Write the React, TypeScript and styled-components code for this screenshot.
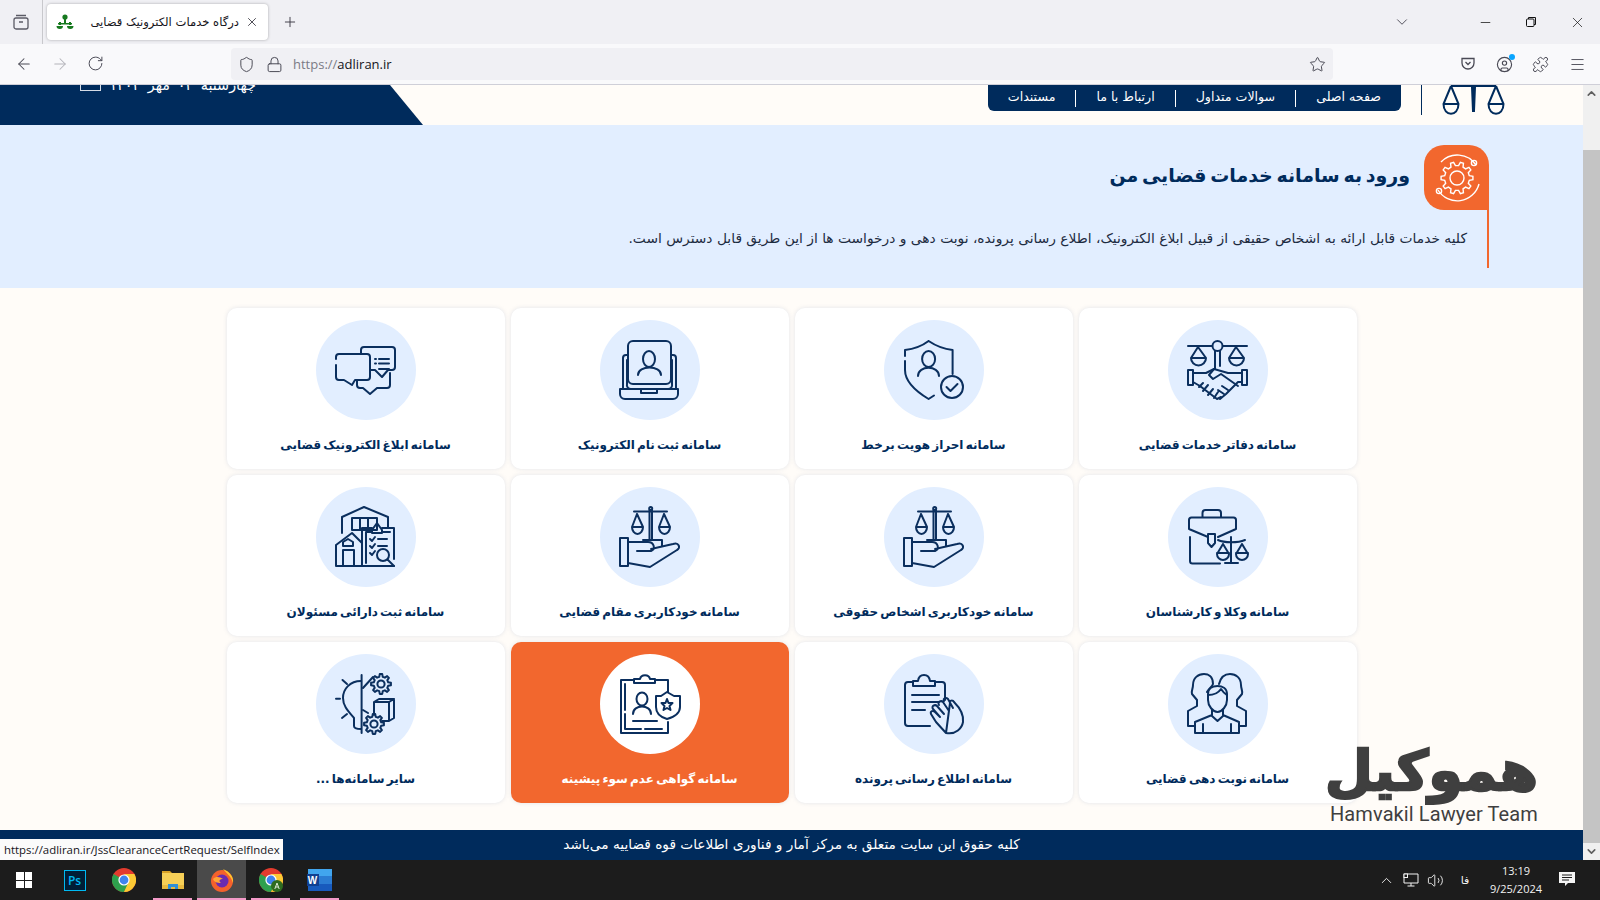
import React from "react";
import styled, { createGlobalStyle } from "styled-components";
import {
  ArrowLeft,
  ArrowRight,
  ChevronDown,
  ChevronUp,
  CircleUser,
  Lock,
  Menu,
  Minus,
  Plus,
  Puzzle,
  RotateCw,
  Shield,
  Star,
  Volume2,
  X,
} from "lucide-react";

const NAVY = "#002b5c";
const ORANGE = "#f2672e";
const SKY = "#e2eeff";

const GlobalStyle = createGlobalStyle`
  html, body {
    margin: 0;
    padding: 0;
    overflow: hidden;
  }
  * {
    box-sizing: border-box;
  }
  body {
    font-family: "DejaVu Sans", "Noto Sans", sans-serif;
  }
`;

// outline of a cog wheel, used by the banner badge and the last card
const gearPath = (cx: number, cy: number, outer: number, inner: number, teeth: number) => {
  const step = (Math.PI * 2) / teeth;
  const points: string[] = [];
  for (let i = 0; i < teeth; i++) {
    const a = i * step;
    [
      [inner, a - step * 0.3],
      [outer, a - step * 0.16],
      [outer, a + step * 0.16],
      [inner, a + step * 0.3],
    ].forEach(([r, t]) => {
      points.push(`${(cx + r * Math.cos(t)).toFixed(2)} ${(cy + r * Math.sin(t)).toFixed(2)}`);
    });
  }
  return `M${points.join("L")}Z`;
};

const Gear = ({ cx, cy, r }: { cx: number; cy: number; r: number }) => (
  <g>
    <circle cx={cx} cy={cy} r={r * 0.36} />
    <path d={gearPath(cx, cy, r, r * 0.74, 8)} />
  </g>
);

const HandshakeArt = () => (
  <IconArt viewBox="0 0 100 100">
    <path d="M20 26H44M55 26H79" />
    <circle cx="49.5" cy="26" r="5" />
    <path d="M47 31V49M52 31V46" />
    <path d="M30 27L23 38a7.5 7.5 0 0 0 15 0L30 27M23 38H38" />
    <path d="M68 27L61 38a7.5 7.5 0 0 0 15 0L68 27M61 38H76" />
    <path d="M20 50h5v15h-5zM74 50h5v15h-5z" />
    <path d="M25 53H38L46 49L60 53H74M74 62H70L58 74L52 79" />
    <path d="M46 49L41 55L45 59L53 54L70 66" />
    <path d="M25 62L32 66L49 79L53 77M35 63L31 67M40 65L35 71M45 69L40 75M50 72L46 78M60 70L54 66M56 74L50 70" />
  </IconArt>
);

const ShieldArt = () => (
  <IconArt viewBox="0 0 100 100">
    <path d="M44.6 21C38 26 30 29 21 30V36M21 41V50C21 62 33 72 44.6 79L50 75.5M44.6 21C52 26 60 29 68.6 30V54" />
    <ellipse cx="44.6" cy="39" rx="6.5" ry="8" />
    <path d="M34 56C34 45 55 45 55 56" />
    <circle cx="68" cy="67" r="11" />
    <path d="M62.5 67l4 4l7-7" />
  </IconArt>
);

const LaptopArt = () => (
  <IconArt viewBox="0 0 100 100">
    <rect x="28" y="21" width="43" height="43" rx="5" />
    <ellipse cx="49" cy="39" rx="6" ry="8" />
    <path d="M38 55C38 45 61 45 61 55" />
    <path d="M28 35H26a3 3 0 0 0-3 3V69M71 35h2a3 3 0 0 1 3 3V69" />
    <path d="M27 40V64a4 4 0 0 0 4 5H41v4H57v-4H68a4 4 0 0 0 4-5V40" />
    <path d="M20 69H78V74a5 5 0 0 1-5 5H25a5 5 0 0 1-5-5Z" />
  </IconArt>
);

const ChatArt = () => (
  <IconArt viewBox="0 0 100 100">
    <path d="M20 39V37a3 3 0 0 1 3-3H51a3 3 0 0 1 3 3V57a3 3 0 0 1-3 3H39L36 65L28 60H23a3 3 0 0 1-3-3V45" />
    <path d="M45 34V30a3 3 0 0 1 3-3H76a3 3 0 0 1 3 3V47a3 3 0 0 1-3 3H72L66 57L59 50H54" />
    <path d="M41 60V65a3 3 0 0 0 3 3H47L54 74L61 68H71a3 3 0 0 0 3-3V53" />
    <path d="M63 39H73M63 43.5H73M63 49H73M59 39H60M59 43.5H60" />
  </IconArt>
);

const BriefcaseArt = () => (
  <IconArt viewBox="0 0 100 100">
    <path d="M34.5 30V26a3 3 0 0 1 3-3H50a3 3 0 0 1 3 3V30" />
    <path d="M40 50L21 42V33a2.5 2.5 0 0 1 2.5-2.5H65.5A2.5 2.5 0 0 1 68 33V42L50 50" />
    <path d="M40 47H47V56L43.5 60L40 56Z" />
    <path d="M22 50V74a2.5 2.5 0 0 0 2.5 2.5H52" />
    <path d="M63 50V76M57 76H70M50 53C56 56 70 56 77 53" />
    <path d="M55 57L49 67a6 6 0 0 0 12 0L55 57M49 66H61" />
    <path d="M74 57L68 67a6 6 0 0 0 12 0L74 57M68 66H80" />
  </IconArt>
);

const HandScalesArt = () => (
  <IconArt viewBox="0 0 100 100">
    <circle cx="50.7" cy="21.5" r="1.5" />
    <path d="M49.5 23V52M52 23V52M34 24.5H67" />
    <path d="M37 27L32 40a5.5 7 0 0 0 11 0L37 27M32 40H43" />
    <path d="M64 27L59 40a5.5 7 0 0 0 11 0L64 27M59 40H70" />
    <path d="M20 51h8v28h-8z" />
    <path d="M43 53H62V59" />
    <path d="M28 55H48C54 55 56 62 51 64H37M51 62L73 57C79 55 81 61 77 63L50 80L28 76" />
  </IconArt>
);

const AssetsArt = () => (
  <IconArt viewBox="0 0 100 100">
    <path d="M26 46V30L48 20L72 30V41" />
    <path d="M36 31H61V43H36ZM44 31V43M52 31V43" />
    <path d="M20 79V58L36 46L46 56M20 79H78" />
    <path d="M27 79V63H38V79M27 59V55L32 52L37 55V59Z" />
    <path d="M46 79V41H56M66 41H78V72M50 76V45H56M66 45H74" />
    <path d="M56 43L61 36L66 43V46H56Z" />
    <path d="M54 52L56 54L59 50M54 59L56 61L59 57M54 66L56 68L59 64M62 52H71M62 59H71" />
    <circle cx="67" cy="68" r="6" />
    <path d="M71.5 72.5L78 79" />
  </IconArt>
);

const PeopleArt = () => (
  <IconArt viewBox="0 0 100 100">
    <path d="M39 38C41 34 44 33 45 30C45 22 40 20 36 20C30 20 25 24 25 31C25 35 23 37 24 40L29 46V52L20 57V72H27" />
    <path d="M51 30C53 22 58 20 62 20C68 20 73 24 73 31C73 35 75 37 74 40L69 46V52L78 57V72H71" />
    <path d="M40 40V46C40 52 45 58 49.5 58C54 58 59 52 59 46V40C59 34 54 32 49.5 32C45 32 40 34 40 40Z" />
    <path d="M40 41C46 41 51 38 53 35C55 38 57 40 59 41" />
    <path d="M44 56V61L27 68V79H71V68L55 61V56M44 62L49.5 67L55 62M35 79V70M63 79V70" />
  </IconArt>
);

const TouchBoardArt = () => (
  <IconArt viewBox="0 0 100 100">
    <path d="M46 72H24a3 3 0 0 1-3-3V31a3 3 0 0 1 3-3H29M51 28H58a3 3 0 0 1 3 3V46" />
    <path d="M29 32V27H34C35 19 45 19 46 27H51V32Z" />
    <path d="M28 41H55M28 48H55M28 56H41" />
    <path d="M62 79L52 68L47 60C46 57 49 56 51 58L56 63L49 55C47 52 51 50 53 52L60 60M55 51C53 48 57 46 59 48L65 57M60 47C59 44 62 43 64 45L69 54M66 49C65 46 69 46 70 48C75 53 80 60 79 68C78 74 72 81 62 79Z" />
  </IconArt>
);

const CertificateArt = () => (
  <IconArt viewBox="0 0 100 100">
    <path d="M34 26H21V79H68V68M55 26H68V38" />
    <path d="M25 30V56M25 60V75H41M45 75H62" />
    <path d="M34 29V25H40C41 20 49 20 50 25H55V29Z" />
    <ellipse cx="42" cy="45" rx="5.5" ry="6.5" />
    <path d="M33 60C33 50 51 50 51 60M33 67H57" />
    <path d="M67 38L74 42L80 42V53C80 59 74 63 67 65C60 63 56 59 56 53V42L61 42Z" />
    <path d="M67 45L68.5 49H72.5L69.5 52L70.5 56L67 54L63.5 56L64.5 52L61.5 49H65.5Z" />
  </IconArt>
);

const BulbArt = () => (
  <IconArt viewBox="0 0 100 100">
    <path d="M45.6 21V79" />
    <path d="M45 27C34 27 27 35 27 44C27 52 32 57 38 64V72C38 74 41 75 45 75" />
    <path d="M26.5 26L31 30M20 44.7H24M26 64L31 60" />
    <path d="M47 34L57 23M47 56L52 59" />
    <path d="M58 48L63 45H78V64L73 67H66M58 48H73V67M73 48L78 45M58 48V61" />
    <Gear cx={65} cy={30} r={10} />
    <Gear cx={58} cy={70} r={10} />
  </IconArt>
);

const services = [
  { title: "سامانه دفاتر خدمات قضایی", Art: HandshakeArt },
  { title: "سامانه احراز هویت برخط", Art: ShieldArt },
  { title: "سامانه ثبت نام الکترونیک", Art: LaptopArt },
  { title: "سامانه ابلاغ الکترونیک قضایی", Art: ChatArt },
  { title: "سامانه وکلا و کارشناسان", Art: BriefcaseArt },
  { title: "سامانه خودکاربری اشخاص حقوقی", Art: HandScalesArt },
  { title: "سامانه خودکاربری مقام قضایی", Art: HandScalesArt },
  { title: "سامانه ثبت دارائی مسئولان", Art: AssetsArt },
  { title: "سامانه نوبت دهی قضایی", Art: PeopleArt },
  { title: "سامانه اطلاع رسانی پرونده", Art: TouchBoardArt },
  { title: "سامانه گواهی عدم سوء پیشینه", Art: CertificateArt, active: true },
  { title: "سایر سامانه‌ها ...", Art: BulbArt },
];

const navLinks = ["صفحه اصلی", "سوالات متداول", "ارتباط با ما", "مستندات"];

const ChromeLogo = ({ badge }: { badge?: boolean }) => (
  <svg width="24" height="24" viewBox="0 0 24 24">
    <circle cx="12" cy="12" r="12" fill="#e33b2e" />
    <path d="M12 12L1.6 6A12 12 0 0 0 12 24L18 13.5Z" fill="#2ea04d" />
    <path d="M12 6H22.4A12 12 0 0 1 12 24L17 13Z" fill="#fcc934" />
    <circle cx="12" cy="12" r="5.6" fill="#fff" />
    <circle cx="12" cy="12" r="4.4" fill="#3f84ee" />
    {badge && <circle cx="18" cy="18" r="6" fill="#2f6b1f" />}
    {badge && <path d="M15.8 21L18 15L20.2 21M16.6 19H19.4" stroke="#dfe9d8" strokeWidth="1" fill="none" />}
  </svg>
);

const App = () => {
  return (
    <Screen>
      <GlobalStyle />
      <TabStrip>
        <StripIcon>
          <svg width="18" height="18" viewBox="0 0 18 18" fill="none" stroke="#5b5b66" strokeWidth="1.3">
            <rect x="2" y="5" width="14" height="11" rx="2" />
            <path d="M4 2.5H14M7 9H11" />
          </svg>
        </StripIcon>
        <StripDivider />
        <Tab>
          <svg width="18" height="18" viewBox="0 0 18 18" fill="#17791f">
            <circle cx="9" cy="4" r="2.6" />
            <path d="M8 6h2v5H8zM2 10h14v1.5H2z" />
            <path d="M0.5 13h6.5a3.2 3 0 0 1-6.5 0zM11 13h6.5a3.2 3 0 0 1-6.5 0zM3 9h2v3H3zM13 9h2v3h-2z" />
          </svg>
          <TabTitle dir="rtl">درگاه خدمات الکترونیک قضایی</TabTitle>
          <X size={14} strokeWidth={1.4} color="#2b2a33" />
        </Tab>
        <NewTab>
          <Plus size={16} strokeWidth={1.4} color="#3a3944" />
        </NewTab>
        <StripSpacer />
        <ChevronDown size={18} strokeWidth={1.2} color="#45444f" />
        <WindowControls>
          <WindowCell>
            <Minus size={15} strokeWidth={1.2} color="#111" />
          </WindowCell>
          <WindowCell>
            <svg width="12" height="12" viewBox="0 0 12 12" fill="none" stroke="#111" strokeWidth="1">
              <rect x="1.5" y="3" width="7.5" height="7.5" rx="1" />
              <path d="M3.5 3V1.5H10.5V8.5H9" />
            </svg>
          </WindowCell>
          <WindowCell>
            <X size={17} strokeWidth={1} color="#111" />
          </WindowCell>
        </WindowControls>
      </TabStrip>

      <Toolbar>
        <ToolButtons>
          <ArrowLeft size={18} strokeWidth={1.4} color="#4a4a55" />
          <ArrowRight size={18} strokeWidth={1.4} color="#b4b4ba" />
          <RotateCw size={17} strokeWidth={1.4} color="#4a4a55" />
        </ToolButtons>
        <UrlBar>
          <Shield size={17} strokeWidth={1.4} color="#4a4a55" />
          <Lock size={17} strokeWidth={1.4} color="#4a4a55" />
          <UrlText>
            <span>https://</span>adliran.ir
          </UrlText>
          <UrlStar>
            <Star size={17} strokeWidth={1.4} color="#4a4a55" />
          </UrlStar>
        </UrlBar>
        <ToolAddons>
          <svg width="16" height="16" viewBox="0 0 16 16" fill="none" stroke="#4a4a55" strokeWidth="1.3">
            <path d="M2 2.5H14V7A6 6 0 0 1 2 7Z" />
            <path d="M5.5 6L8 8.5L10.5 6" />
          </svg>
          <AccountIcon>
            <CircleUser size={17} strokeWidth={1.6} color="#4a4a55" />
          </AccountIcon>
          <Puzzle size={17} strokeWidth={1.4} color="#4a4a55" />
          <Menu size={17} strokeWidth={1.3} color="#4a4a55" />
        </ToolAddons>
      </Toolbar>

      <Viewport>
        <Page dir="rtl">
          <Header>
            <HeaderScales width="63" height="30" viewBox="0 0 63 30" fill="none" stroke={NAVY} strokeWidth="2">
              <path d="M9 1H54" />
              <path d="M9 1L1.5 19C1.5 32 16.5 32 16.5 19L9 1M1.5 19H16.5" />
              <path d="M54 1L46.5 19C46.5 32 61.5 32 61.5 19L54 1M46.5 19H61.5" />
              <path d="M30 2h3l-1 24h-1z" fill={NAVY} />
            </HeaderScales>
            <HeaderRule />
            <NavBar>
              {navLinks.map((link, idx) => (
                <NavLink key={idx} $last={idx === navLinks.length - 1}>
                  {link}
                </NavLink>
              ))}
            </NavBar>
            <DateRibbon>
              <DateText>چهارشنبه ۰۴ مهر ۱۴۰۳</DateText>
              <CalendarBox />
            </DateRibbon>
          </Header>

          <Banner>
            <BannerHead>
              <BannerBadge>
                <svg width="50" height="50" viewBox="0 0 50 50" fill="none" stroke="#fff" strokeWidth="1.4">
                  <circle cx="25" cy="25" r="7" />
                  <path d={gearPath(25, 25, 16, 12.5, 10)} />
                  <path d="M44 12A22.5 22.5 0 0 0 9 9M6 37A22.5 22.5 0 0 0 47 31" />
                  <circle cx="42" cy="10" r="2.6" />
                  <circle cx="7" cy="38" r="2.6" />
                </svg>
              </BannerBadge>
              <BannerTitle>ورود به سامانه خدمات قضایی من</BannerTitle>
            </BannerHead>
            <BannerBody>
              کلیه خدمات قابل ارائه به اشخاص حقیقی از قبیل ابلاغ الکترونیک، اطلاع رسانی پرونده، نوبت دهی و درخواست ها از این طریق قابل دسترس است.
            </BannerBody>
          </Banner>

          <ServiceGrid>
            {services.map((service, idx) => (
              <ServiceCard key={idx} $active={service.active}>
                <IconCircle $active={service.active}>
                  <service.Art />
                </IconCircle>
                <ServiceLabel $active={service.active}>{service.title}</ServiceLabel>
              </ServiceCard>
            ))}
          </ServiceGrid>

          <Footer>کلیه حقوق این سایت متعلق به مرکز آمار و فناوری اطلاعات قوه قضاییه می‌باشد</Footer>
          <StatusTip dir="ltr">https://adliran.ir/JssClearanceCertRequest/SelfIndex</StatusTip>
        </Page>
        <Scrollbar>
          <ScrollArrow>
            <ChevronUp size={13} strokeWidth={3} color="#606060" />
          </ScrollArrow>
          <ScrollGap />
          <ScrollThumb />
          <ScrollArrow>
            <ChevronDown size={13} strokeWidth={3} color="#606060" />
          </ScrollArrow>
        </Scrollbar>
        <Watermark>
          <WatermarkFa dir="rtl">هموکیل</WatermarkFa>
          <WatermarkEn>Hamvakil Lawyer Team</WatermarkEn>
        </Watermark>
      </Viewport>

      <Taskbar>
        <TaskApps>
          <WinLogo>
            <span />
            <span />
            <span />
            <span />
          </WinLogo>
          <TaskSlot>
            <PsTile>Ps</PsTile>
          </TaskSlot>
          <TaskSlot>
            <ChromeLogo />
          </TaskSlot>
          <TaskSlot $mark={5}>
            <svg width="24" height="20" viewBox="0 0 24 20">
              <path d="M1 1h8l2 2h-10z" fill="#d9a227" />
              <rect x="1" y="3" width="22" height="16" fill="#f6cf57" />
              <rect x="1" y="15" width="22" height="4" fill="#e8b93f" />
              <path d="M7 19v-5h10v5h-3v-2h-4v2z" fill="#2f8fd8" />
            </svg>
          </TaskSlot>
          <TaskSlot $mark={0} $active>
            <svg width="24" height="24" viewBox="0 0 24 24">
              <circle cx="12" cy="13" r="11" fill="#f4612c" />
              <path d="M13 1C20 4 24 9 23 15C21 8 17 6 13 1Z" fill="#ffc52e" />
              <circle cx="12" cy="13" r="6.5" fill="#6a2bb0" />
              <path d="M3 11C6 8 10 9 13 11C10 11 8 13 11 15C7 15 4 14 3 11Z" fill="#ffa436" />
            </svg>
          </TaskSlot>
          <TaskSlot $mark={5}>
            <ChromeLogo badge />
          </TaskSlot>
          <TaskSlot $mark={5}>
            <WordTile>
              <WordLetter>W</WordLetter>
            </WordTile>
          </TaskSlot>
        </TaskApps>
        <Tray>
          <ChevronUp size={17} strokeWidth={1.3} color="#f2f2f2" />
          <svg width="16" height="16" viewBox="0 0 16 16" fill="none" stroke="#f2f2f2" strokeWidth="1">
            <path d="M3 2H15V11H1V2H3M8 11V14M4.5 14H11.5" />
            <rect x="1" y="2" width="3.5" height="3.5" fill="#1c1c1c" />
          </svg>
          <Volume2 size={17} strokeWidth={1.3} color="#f2f2f2" />
          <TrayLang>فا</TrayLang>
          <Clock>
            <span>13:19</span>
            <span>9/25/2024</span>
          </Clock>
          <svg width="17" height="16" viewBox="0 0 17 16" fill="#f5f5f5">
            <path d="M0 0H16V11H9L6 14V11H0Z" />
            <path d="M3 3H13M3 5.5H13M3 8H10" stroke="#1c1c1c" strokeWidth="1" />
          </svg>
        </Tray>
      </Taskbar>
    </Screen>
  );
};

export default App;

const Screen = styled.div`
  width: 1600px;
  height: 900px;
  display: flex;
  flex-direction: column;
  overflow: hidden;
  position: relative;
`;

const TabStrip = styled.div`
  height: 44px;
  background-color: #f0f0f4;
  display: flex;
  align-items: center;
`;

const StripIcon = styled.div`
  width: 42px;
  display: flex;
  justify-content: center;
`;

const StripDivider = styled.div`
  width: 1px;
  height: 44px;
  background-color: #c8c8cc;
`;

const Tab = styled.div`
  width: 221px;
  height: 36px;
  margin-left: 4px;
  padding: 0 9px;
  display: flex;
  align-items: center;
  gap: 6px;
  background-color: #fff;
  border-radius: 4px;
  box-shadow: 0 0 3px rgba(0, 0, 0, 0.3);
`;

const TabTitle = styled.div`
  flex: 1;
  font-size: 11.6px;
  color: #15141a;
  white-space: nowrap;
`;

const NewTab = styled.div`
  width: 44px;
  display: flex;
  justify-content: center;
`;

const StripSpacer = styled.div`
  flex: 1;
`;

const WindowControls = styled.div`
  margin: 0 0 0 51px;
  display: flex;
`;

const WindowCell = styled.div`
  width: 46px;
  display: flex;
  align-items: center;
  justify-content: center;
`;

const Toolbar = styled.div`
  height: 41px;
  background-color: #f9f9fb;
  border-bottom: 1px solid #cfcfd8;
  display: flex;
  align-items: center;
`;

const ToolButtons = styled.div`
  width: 231px;
  padding-left: 15px;
  display: flex;
  gap: 18px;
`;

const UrlBar = styled.div`
  width: 1102px;
  height: 32px;
  padding: 0 7px;
  background-color: #f0f0f4;
  border-radius: 4px;
  display: flex;
  align-items: center;
  gap: 11px;
`;

const UrlText = styled.div`
  margin-left: -1px;
  font-family: "Open Sans", sans-serif;
  font-size: 13px;
  color: #15141a;

  span {
    color: #7b7b85;
  }
`;

const UrlStar = styled.div`
  margin-left: auto;
  display: flex;
`;

const ToolAddons = styled.div`
  flex: 1;
  padding: 0 14px 0 127px;
  display: flex;
  align-items: center;
  justify-content: space-between;
`;

const AccountIcon = styled.div`
  position: relative;
  display: flex;

  &::after {
    content: "";
    position: absolute;
    top: -2px;
    right: -2px;
    width: 6px;
    height: 6px;
    border-radius: 50%;
    background-color: #0aa5ff;
  }
`;

const Viewport = styled.div`
  flex: 1;
  min-height: 0;
  display: flex;
  position: relative;
`;

const Page = styled.div`
  width: 1583px;
  position: relative;
  display: flex;
  flex-direction: column;
  background-color: #fffcf8;
  font-family: "DejaVu Sans", sans-serif;
`;

const Header = styled.header`
  height: 40px;
  padding-right: 78px;
  display: flex;
  align-items: flex-start;
  overflow: hidden;
`;

const HeaderScales = styled.svg`
  flex: none;
`;

const HeaderRule = styled.div`
  width: 1px;
  height: 30px;
  margin: 0 20px 0 20px;
  background-color: ${NAVY};
`;

const NavBar = styled.nav`
  height: 26px;
  display: flex;
  align-items: center;
  background-color: ${NAVY};
  border-radius: 0 0 6px 6px;
`;

const NavLink = styled.div<{ $last: boolean }>`
  height: 17px;
  padding: 0 20px;
  font-size: 12.6px;
  line-height: 13px;
  color: #fff;
  white-space: nowrap;
  border-left: ${(props) => (props.$last ? "none" : "1px solid #fff")};
`;

const DateRibbon = styled.div`
  width: 423px;
  height: 40px;
  margin-right: auto;
  padding-right: 167px;
  display: flex;
  gap: 8px;
  align-items: flex-start;
  background-color: ${NAVY};
  clip-path: polygon(0 0, 390px 0, 423px 100%, 0 100%);
`;

const DateText = styled.div`
  margin-top: -10px;
  font-size: 14.4px;
  word-spacing: 3px;
  line-height: 20px;
  color: #fff;
  white-space: nowrap;
`;

const CalendarBox = styled.div`
  width: 21px;
  height: 6px;
  border: 1px solid #d5dce6;
  border-top: none;
`;

const Banner = styled.section`
  height: 163px;
  padding: 20px 94px 0 0;
  background-color: ${SKY};
`;

const BannerHead = styled.div`
  display: flex;
  align-items: center;
  gap: 14px;
`;

const BannerBadge = styled.div`
  width: 65px;
  height: 65px;
  display: flex;
  align-items: center;
  justify-content: center;
  background-color: ${ORANGE};
  border-radius: 20px 20px 0 20px;
`;

const BannerTitle = styled.h1`
  margin: 0 0 4px;
  font-size: 19px;
  word-spacing: -3px;
  font-weight: 700;
  line-height: 1.3;
  color: ${NAVY};
`;

const BannerBody = styled.p`
  height: 58px;
  margin: 0;
  padding: 16px 20px 0 0;
  border-right: 2px solid ${ORANGE};
  font-size: 13.8px;
  line-height: 24px;
  color: #1d2b3f;
  white-space: nowrap;
`;

const ServiceGrid = styled.div`
  width: 1130px;
  margin: 20px auto 0;
  display: grid;
  grid-template-columns: repeat(4, 278px);
  grid-auto-rows: 161px;
  gap: 6px;
`;

const ServiceCard = styled.div<{ $active?: boolean }>`
  padding-top: 12px;
  display: flex;
  flex-direction: column;
  align-items: center;
  background-color: ${(props) => (props.$active ? ORANGE : "#fff")};
  border-radius: 10px;
  box-shadow: 0 0 4px rgba(190, 200, 215, 0.45);
`;

const IconCircle = styled.div<{ $active?: boolean }>`
  width: 100px;
  height: 100px;
  border-radius: 50%;
  background-color: ${(props) => (props.$active ? "#fff" : SKY)};
`;

const IconArt = styled.svg`
  width: 100px;
  height: 100px;
  display: block;
  fill: none;
  stroke: #0b2f5e;
  stroke-width: 2;
  stroke-linecap: round;
  stroke-linejoin: round;
`;

const ServiceLabel = styled.div<{ $active?: boolean }>`
  margin-top: 15px;
  font-size: 12px;
  word-spacing: -2px;
  font-weight: 700;
  line-height: 20px;
  color: ${(props) => (props.$active ? "#fff" : NAVY)};
  white-space: nowrap;
`;

const Footer = styled.footer`
  height: 30px;
  margin-top: auto;
  padding-bottom: 2px;
  display: flex;
  align-items: center;
  justify-content: center;
  background-color: ${NAVY};
  font-size: 13.7px;
  color: #fff;
`;

const StatusTip = styled.div`
  position: absolute;
  left: 0;
  bottom: 0;
  width: 283px;
  height: 21px;
  padding-left: 4px;
  background-color: #fbfbfb;
  font-family: "Open Sans", sans-serif;
  font-size: 11.4px;
  line-height: 21px;
  color: #15141a;
  white-space: nowrap;
`;

const Scrollbar = styled.div`
  width: 17px;
  display: flex;
  flex-direction: column;
  background-color: #f0f0f0;
`;

const ScrollArrow = styled.div`
  height: 17px;
  display: flex;
  align-items: center;
  justify-content: center;
`;

const ScrollGap = styled.div`
  height: 48px;
`;

const ScrollThumb = styled.div`
  flex: 1;
  background-color: #c4c4c4;
`;

const Watermark = styled.div`
  position: absolute;
  left: 1330px;
  top: 655px;
  width: 208px;
  color: #3f3f3f;
`;

const WatermarkFa = styled.div`
  font-family: "DejaVu Sans", sans-serif;
  font-size: 55px;
  font-weight: 700;
  line-height: 62px;
  white-space: nowrap;
  text-align: center;
  -webkit-text-stroke: 2.5px #3f3f3f;
`;

const WatermarkEn = styled.div`
  font-family: "Roboto", sans-serif;
  font-size: 20px;
  line-height: 24px;
  letter-spacing: 0.1px;
  white-space: nowrap;
`;

const Taskbar = styled.div`
  height: 40px;
  background-color: #1c1c1c;
  display: flex;
  align-items: center;
  justify-content: space-between;
`;

const TaskApps = styled.div`
  height: 40px;
  display: flex;
  align-items: center;
`;

const WinLogo = styled.div`
  width: 16px;
  height: 16px;
  margin: 0 18px 0 16px;
  display: grid;
  grid-template-columns: 1fr 1fr;
  gap: 1px;

  span {
    background-color: #fff;
  }
`;

const TaskSlot = styled.div<{ $mark?: number; $active?: boolean }>`
  width: 49px;
  height: 40px;
  position: relative;
  display: flex;
  align-items: center;
  justify-content: center;
  background-color: ${(props) => (props.$active ? "#4a4a4a" : "transparent")};

  &::after {
    content: "";
    display: ${(props) => (props.$mark === undefined ? "none" : "block")};
    position: absolute;
    left: ${(props) => props.$mark ?? 0}px;
    right: ${(props) => props.$mark ?? 0}px;
    bottom: 0;
    height: 2px;
    background-color: #f39ac8;
  }
`;

const PsTile = styled.div`
  width: 22px;
  height: 21px;
  display: flex;
  align-items: center;
  justify-content: center;
  background-color: #001e36;
  border: 1px solid #00b9f2;
  font-family: "Open Sans", sans-serif;
  font-size: 12px;
  font-weight: 600;
  color: #00b9f2;
`;

const WordTile = styled.div`
  width: 24px;
  height: 22px;
  position: relative;
  background: linear-gradient(#41a5ee 0 33%, #2b7cd3 33% 66%, #185abd 66% 100%);
`;

const WordLetter = styled.div`
  position: absolute;
  left: -1px;
  top: 5px;
  width: 12px;
  height: 12px;
  display: flex;
  align-items: center;
  justify-content: center;
  background-color: #103f91;
  font-family: "Liberation Sans", sans-serif;
  font-size: 10px;
  font-weight: 700;
  color: #fff;
`;

const Tray = styled.div`
  height: 40px;
  padding-right: 24px;
  display: flex;
  align-items: center;
  gap: 8px;
  color: #f2f2f2;
`;

const TrayLang = styled.div`
  width: 30px;
  margin-left: -2px;
  text-align: center;
  font-family: "DejaVu Sans", sans-serif;
  font-size: 11px;
`;

const Clock = styled.div`
  width: 66px;
  margin: 0 2px 0 -5px;
  display: flex;
  flex-direction: column;
  align-items: center;
  font-family: "Open Sans", sans-serif;
  font-size: 11px;
  line-height: 18px;
`;
